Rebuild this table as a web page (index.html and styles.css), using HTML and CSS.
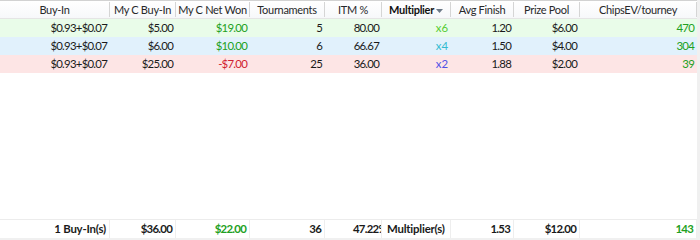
FILE: index.html
```html
<!DOCTYPE html>
<html>
<head>
<meta charset="utf-8">
<link rel="stylesheet" href="styles.css">
</head>
<body>
<div class="grid">
  <div class="row head">
    <div class="c">Buy-In</div>
    <div class="c">My C Buy-In</div>
    <div class="c">My C Net Won</div>
    <div class="c">Tournaments</div>
    <div class="c">ITM %</div>
    <div class="c sorted">Multiplier<svg class="arrow" width="7" height="4" viewBox="0 0 7 4"><path d="M0 0h7L3.5 4z" fill="#6d7a88"/></svg></div>
    <div class="c">Avg Finish</div>
    <div class="c">Prize Pool</div>
    <div class="c">ChipsEV/tourney</div>
  </div>
  <div class="row data green">
    <div class="c">$0.93+$0.07</div>
    <div class="c">$5.00</div>
    <div class="c pos">$19.00</div>
    <div class="c">5</div>
    <div class="c">80.00</div>
    <div class="c m6">x6</div>
    <div class="c">1.20</div>
    <div class="c">$6.00</div>
    <div class="c pos">470</div>
  </div>
  <div class="row data blue">
    <div class="c">$0.93+$0.07</div>
    <div class="c">$6.00</div>
    <div class="c pos">$10.00</div>
    <div class="c">6</div>
    <div class="c">66.67</div>
    <div class="c m4">x4</div>
    <div class="c">1.50</div>
    <div class="c">$4.00</div>
    <div class="c pos">304</div>
  </div>
  <div class="row data pink">
    <div class="c">$0.93+$0.07</div>
    <div class="c">$25.00</div>
    <div class="c neg">-$7.00</div>
    <div class="c">25</div>
    <div class="c">36.00</div>
    <div class="c m2">x2</div>
    <div class="c">1.88</div>
    <div class="c">$2.00</div>
    <div class="c pos">39</div>
  </div>
  <div class="fill"></div>
  <div class="row foot">
    <div class="c txt">1 Buy-In(s)</div>
    <div class="c">$36.00</div>
    <div class="c pos">$22.00</div>
    <div class="c">36</div>
    <div class="c clip">47.22%</div>
    <div class="c txt left">Multiplier(s)</div>
    <div class="c">1.53</div>
    <div class="c">$12.00</div>
    <div class="c pos">143</div>
  </div>
</div>
</body>
</html>
```

FILE: styles.css
```css
html, body {
  margin: 0;
  padding: 0;
  background: #f0f0f0;
}
body {
  width: 700px;
  height: 240px;
  overflow: hidden;
  font-family: Lato, "Noto Sans", sans-serif;
  font-size: 12px;
  color: #1a1a1a;
}
.grid {
  width: 697px;
  height: 238px;
  background: #fff;
  display: flex;
  flex-direction: column;
}
.row {
  display: grid;
  grid-template-columns: 110px 66px 74px 75px 57px 69px 63px 66px 117px;
}
.c {
  padding: 0 3px;
  text-align: right;
  white-space: nowrap;
  overflow: hidden;
}
.head {
  height: 19px;
  border-top: 1px solid #d2d2d2;
  border-bottom: 1px solid #e5e5e5;
  box-sizing: border-box;
  background: linear-gradient(#ffffff, #f7f8fa);
  color: #27282a;
  align-items: center;
  font-size: 11px;
  letter-spacing: -0.3px;
}
.head .c {
  text-align: center;
  border-right: 1px solid #d5d5d5;
  line-height: 15px;
  padding: 0 1px;
}
.head .sorted {
  font-weight: bold;
  color: #111;
}
.arrow {
  margin-left: 2px;
  vertical-align: middle;
}
.data, .foot {
  font-size: 11.4px;
  letter-spacing: -0.75px;
}
.data {
  height: 18px;
  line-height: 18px;
}
.green { background: #e9fce9; }
.blue { background: #e1f1fc; }
.pink { background: #fde5e5; }
.pos { color: #22a022; }
.neg { color: #d02030; }
.m6 { color: #55cc33; letter-spacing: 0; }
.m4 { color: #33bbd0; letter-spacing: 0; }
.m2 { color: #5050e6; letter-spacing: 0; }
.fill { flex: 1; }
.foot {
  height: 19px;
  line-height: 18px;
  border-top: 1px solid #ececec;
  box-sizing: border-box;
  font-weight: bold;
}
.foot .c {
  border-right: 1px solid #eeeeee;
}
.foot .txt {
  letter-spacing: -0.2px;
}
.foot .clip {
  text-align: left;
  padding-left: 28px;
  padding-right: 0;
}
.foot .left {
  text-align: left;
  padding-left: 5px;
}
```
